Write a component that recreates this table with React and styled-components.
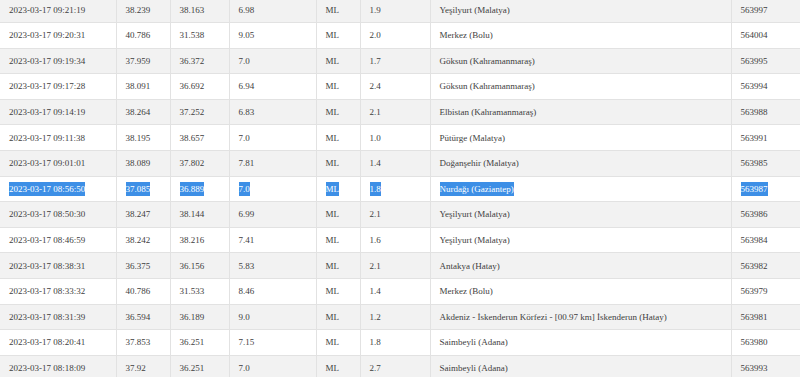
import React from 'react';
import styled, { createGlobalStyle } from 'styled-components';

const GlobalStyle = createGlobalStyle`
    html, body {
        margin: 0;
        padding: 0;
        background: #ffffff;
    }
`;

const columns = [116, 54, 59, 87, 44, 70, 301, 90];

const rows = [
    ['2023-03-17 09:21:19', '38.239', '38.163', '6.98', 'ML', '1.9', 'Yeşilyurt (Malatya)', '563997'],
    ['2023-03-17 09:20:31', '40.786', '31.538', '9.05', 'ML', '2.0', 'Merkez (Bolu)', '564004'],
    ['2023-03-17 09:19:34', '37.959', '36.372', '7.0', 'ML', '1.7', 'Göksun (Kahramanmaraş)', '563995'],
    ['2023-03-17 09:17:28', '38.091', '36.692', '6.94', 'ML', '2.4', 'Göksun (Kahramanmaraş)', '563994'],
    ['2023-03-17 09:14:19', '38.264', '37.252', '6.83', 'ML', '2.1', 'Elbistan (Kahramanmaraş)', '563988'],
    ['2023-03-17 09:11:38', '38.195', '38.657', '7.0', 'ML', '1.0', 'Pütürge (Malatya)', '563991'],
    ['2023-03-17 09:01:01', '38.089', '37.802', '7.81', 'ML', '1.4', 'Doğanşehir (Malatya)', '563985'],
    ['2023-03-17 08:56:50', '37.085', '36.889', '7.0', 'ML', '1.8', 'Nurdağı (Gaziantep)', '563987'],
    ['2023-03-17 08:50:30', '38.247', '38.144', '6.99', 'ML', '2.1', 'Yeşilyurt (Malatya)', '563986'],
    ['2023-03-17 08:46:59', '38.242', '38.216', '7.41', 'ML', '1.6', 'Yeşilyurt (Malatya)', '563984'],
    ['2023-03-17 08:38:31', '36.375', '36.156', '5.83', 'ML', '2.1', 'Antakya (Hatay)', '563982'],
    ['2023-03-17 08:33:32', '40.786', '31.533', '8.46', 'ML', '1.4', 'Merkez (Bolu)', '563979'],
    ['2023-03-17 08:31:39', '36.594', '36.189', '9.0', 'ML', '1.2', 'Akdeniz - İskenderun Körfezi - [00.97 km] İskenderun (Hatay)', '563981'],
    ['2023-03-17 08:20:41', '37.853', '36.251', '7.15', 'ML', '1.8', 'Saimbeyli (Adana)', '563980'],
    ['2023-03-17 08:18:09', '37.92', '36.251', '7.0', 'ML', '2.7', 'Saimbeyli (Adana)', '563993'],
];

const SELECTED = 7;

function App() {
    return (
        <>
            <GlobalStyle />
            <Page>
                <Table>
                    <colgroup>
                        {columns.map((w, i) => (
                            <Col key={i} $w={w} />
                        ))}
                    </colgroup>
                    <tbody>
                        {rows.map((row, r) => (
                            <Row key={r} $striped={r % 2 === 0}>
                                {row.map((value, c) => (
                                    <Cell key={c}>
                                        {r === SELECTED ? (
                                            <Selected>{c === 6 ? value + ' ' : value}</Selected>
                                        ) : (
                                            value
                                        )}
                                    </Cell>
                                ))}
                            </Row>
                        ))}
                    </tbody>
                </Table>
            </Page>
        </>
    );
}

const Page = styled.div`
    width: 800px;
    height: 377px;
    overflow: hidden;
    background: #ffffff;
`;

const Table = styled.table`
    margin-top: -3.6px;
    width: 821px;
    table-layout: fixed;
    border-collapse: collapse;
    font-family: "Liberation Serif", "Times New Roman", serif;
    font-size: 9px;
    color: #3e3e3e;
`;

const Col = styled.col`
    width: ${props => props.$w}px;
`;

const Row = styled.tr`
    height: 25.6px;
    background: ${props => (props.$striped ? '#f2f2f2' : '#ffffff')};
    border-top: 1px solid #e2e2e2;
`;

const Cell = styled.td`
    padding: 0 9px;
    border-left: 1px solid #e2e2e2;
    white-space: nowrap;
    vertical-align: middle;
    line-height: 12px;

    &:first-child{
        border-left: none;
    }
`;

const Selected = styled.span`
    background: #3d8fe6;
    color: #ffffff;
    padding: 2px 0;
`;

export default App;
